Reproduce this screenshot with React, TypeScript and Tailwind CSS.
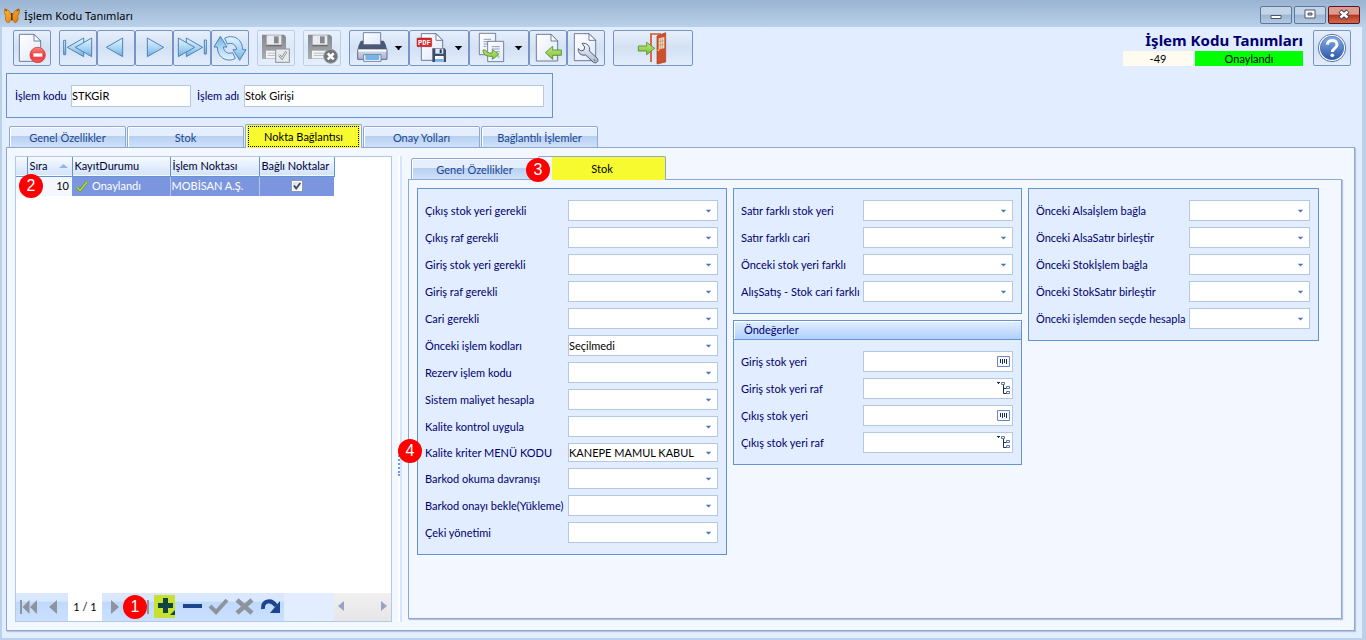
import { useId, type ReactNode } from "react";

const STEEL = "#5d6b8f";

function Badge({ n, place }: { n: number; place: string }) {
  return (
    <span
      className={`absolute z-10 flex h-6 w-6 items-center justify-center rounded-full bg-[#fe0000] font-[family-name:Liberation_Sans,sans-serif] text-[16px] leading-6 text-white ${place}`}
    >
      {n}
    </span>
  );
}

function Defs() {
  return (
    <svg className="absolute h-0 w-0" aria-hidden="true">
      <defs>
        <linearGradient id="page" x1="0" y1="0" x2="1" y2="1">
          <stop offset="0" stopColor="#ffffff" />
          <stop offset="1" stopColor="#dfe8f8" />
        </linearGradient>
        <linearGradient id="sky" x1="0" y1="0" x2="0" y2="1">
          <stop offset="0" stopColor="#e3f4ff" />
          <stop offset="0.55" stopColor="#a9d4f3" />
          <stop offset="1" stopColor="#6db0e0" />
        </linearGradient>
        <linearGradient id="red" x1="0" y1="0" x2="0" y2="1">
          <stop offset="0" stopColor="#ff8a86" />
          <stop offset="0.5" stopColor="#ee3a3c" />
          <stop offset="1" stopColor="#f4565a" />
        </linearGradient>
        <linearGradient id="green" x1="0" y1="0" x2="0" y2="1">
          <stop offset="0" stopColor="#c3e67c" />
          <stop offset="1" stopColor="#7fc03a" />
        </linearGradient>
        <linearGradient id="grey" x1="0" y1="0" x2="0" y2="1">
          <stop offset="0" stopColor="#85888e" />
          <stop offset="1" stopColor="#a9acb1" />
        </linearGradient>
        <linearGradient id="silver" x1="0" y1="0" x2="0" y2="1">
          <stop offset="0" stopColor="#f8faff" />
          <stop offset="1" stopColor="#a9b5cf" />
        </linearGradient>
        <linearGradient id="blue" x1="0" y1="0" x2="0" y2="1">
          <stop offset="0" stopColor="#86aee6" />
          <stop offset="1" stopColor="#2b57ab" />
        </linearGradient>
        <linearGradient id="wing" x1="0" y1="0" x2="1" y2="1">
          <stop offset="0" stopColor="#ffb52e" />
          <stop offset="1" stopColor="#e07a10" />
        </linearGradient>
      </defs>
    </svg>
  );
}

function Page({ x, y, w, h, f = 20 }: { x: number; y: number; w: number; h: number; f?: number }) {
  return (
    <g stroke={STEEL} strokeWidth="2.6" strokeLinejoin="round">
      <path fill="url(#page)" d={`M${x} ${y}H${x + w - f}L${x + w} ${y + f}V${y + h}H${x}Z`} />
      <path fill="#fff" d={`M${x + w - f} ${y}V${y + f}H${x + w}Z`} />
    </g>
  );
}

function Art({ x, wide, children }: { x: number; wide: string; children: ReactNode }) {
  const width = wide === "w-[58px]" ? 174 : wide === "w-[78px]" ? 234 : 108;
  return (
    <svg className={`h-[34px] ${wide}`} viewBox={`${x} 93 ${width} 102`} aria-hidden="true">
      {children}
    </svg>
  );
}

function GreyFloppy({ x }: { x: number }) {
  return (
    <g>
      <path fill="url(#grey)" d={`M${x} 104h66l6 6v67h-72z`} />
      <path fill="#e9ebee" d={`M${x + 14} 106h44v28h-44z`} />
      <path fill="#85888d" d={`M${x + 36} 109h14v21h-14z`} />
      <path fill="#6b6e74" d={`M${x + 13} 135h46v4h-46z`} />
      <path fill="#f2f3f5" d={`M${x + 12} 152h44v23h-44z`} />
      <path fill="#bcbfc4" d={`M${x + 17} 158h32v3h-32zM${x + 17} 165h32v3h-32z`} />
    </g>
  );
}

const PrintDrop = <path fill="#000" d="M164 138h23l-9 9v3h-5v-3z" />;

type Tool = { label: string; art: ReactNode; wide?: "menu" | "exit"; disabled?: boolean };

const nav = { fill: "url(#sky)", stroke: "#4f83b6", strokeWidth: 3, strokeLinejoin: "round" as const };
const TURN = "M674 115C694 103 727 112 728 149H738L719 181L699 149H710C708 133 696 127 682 132Z";

const toolGroups: Tool[][] = [
  [
    {
      label: "Sil",
      art: (
        <Art x={42} wide="w-[36px]">
          <Page x={58} y={103} w={64} h={81} />
          <circle cx="113" cy="165" r="23" fill="url(#red)" stroke="#d33b40" strokeWidth="2.5" />
          <rect x="100" y="160" width="27" height="10" fill="#fff" />
        </Art>
      ),
    },
  ],
  [
    {
      label: "İlk",
      art: (
        <Art x={180} wide="w-[36px]">
          <g {...nav}>
            <path d="M191 121h6v43h-6z" />
            <path d="M202 142l49-28v56z" />
            <path d="M226 142l49-28v56z" />
          </g>
        </Art>
      ),
    },
    {
      label: "Önceki",
      art: (
        <Art x={294} wide="w-[36px]">
          <path {...nav} d="M319 142l49-28v56z" />
        </Art>
      ),
    },
    {
      label: "Sonraki",
      art: (
        <Art x={408} wide="w-[36px]">
          <path {...nav} d="M442 114v56l49-28z" />
        </Art>
      ),
    },
    {
      label: "Son",
      art: (
        <Art x={522} wide="w-[36px]">
          <g {...nav}>
            <path d="M559 114v56l49-28z" />
            <path d="M535 114v56l49-28z" />
            <path d="M613 120h6v42h-6z" />
          </g>
        </Art>
      ),
    },
    {
      label: "Yenile",
      art: (
        <Art x={636} wide="w-[36px]">
          <g {...nav}>
            <path d={TURN} />
            <path d={TURN} transform="rotate(180 690 145)" />
          </g>
        </Art>
      ),
    },
  ],
  [
    {
      label: "Kaydet ve onayla",
      disabled: true,
      art: (
        <Art x={774} wide="w-[36px]">
          <GreyFloppy x={786} />
          <rect x="827" y="147" width="41" height="40" fill="#e6e9ee" stroke="#8f9299" strokeWidth="3" />
          <path d="M837 165l9 10 13-21" fill="none" stroke="#8a8d93" strokeWidth="7" />
          <path d="M837 165l9 10 13-21" fill="none" stroke="#fff" strokeWidth="2.5" />
        </Art>
      ),
    },
  ],
  [
    {
      label: "Kaydet ve kapat",
      disabled: true,
      art: (
        <Art x={912} wide="w-[36px]">
          <GreyFloppy x={924} />
          <circle cx="992" cy="169" r="21" fill="#717479" stroke="#a6a9ae" strokeWidth="3" />
          <path d="M983 160l18 18M1001 160l-18 18" stroke="#fff" strokeWidth="8" />
        </Art>
      ),
    },
  ],
  [
    {
      label: "Yazdır",
      wide: "menu",
      art: (
        <Art x={30} wide="w-[58px]">
          <path d="M53 151l9-26h70l9 26v27h-88z" fill="url(#silver)" stroke={STEEL} strokeWidth="3" strokeLinejoin="round" />
          <path d="M64 122h66l8 15v11H56v-11z" fill="#4b5873" />
          <path d="M70 98h52v36H70z" fill="url(#page)" stroke={STEEL} strokeWidth="2.5" />
          <path d="M55 152h84" stroke="#fff" strokeWidth="5" />
          <path d="M71 164h52v20H71z" fill="#fff" stroke={STEEL} strokeWidth="2.5" />
          <path d="M76 165h42v15H76z" fill="#74b6ec" />
          {PrintDrop}
        </Art>
      ),
    },
    {
      label: "PDF olarak kaydet",
      wide: "menu",
      art: (
        <Art x={210} wide="w-[58px]">
          <Page x={244} y={101} w={64} h={80} />
          <rect x="231" y="114" width="44" height="26" rx="2" fill="#d8282c" stroke="#a51d22" strokeWidth="1.5" />
          <text x="253" y="134" textAnchor="middle" fontSize="21" fontWeight="700" fontFamily="Liberation Mono, monospace" fill="#fff">
            PDF
          </text>
          <path d="M277 145h37l4 4v37h-41z" fill="#3e4d6c" />
          <path d="M286 146h24v15h-24z" fill="#dfe8f8" />
          <path d="M299 148h6v11h-6z" fill="#2b3650" />
          <path d="M285 168h26v17h-26z" fill="#fff" />
          <path d="M285 177h26v8h-26z" fill="#74b6ec" />
          <g transform="translate(180)">{PrintDrop}</g>
        </Art>
      ),
    },
    {
      label: "Kopyala",
      wide: "menu",
      art: (
        <Art x={390} wide="w-[58px]">
          <path d="M418 100h49v64h-49z" fill="url(#page)" stroke={STEEL} strokeWidth="2.5" />
          <path d="M431 118h22M431 125h22M431 132h14M431 139h8" stroke="#8d9dc0" strokeWidth="3" />
          <path d="M443 124h48v61h-48z" fill="url(#page)" stroke={STEEL} strokeWidth="2.5" />
          <path d="M455 140h24M455 147h24M468 155h11M472 171h7" stroke="#8d9dc0" strokeWidth="3" />
          <path d="M429 150h8c1 7 8 10 20 9v-10l20 14-20 15v-9c-18 1-28-5-28-19z" fill="url(#green)" stroke="#4c8a2a" strokeWidth="2.5" strokeLinejoin="round" />
          <g transform="translate(360)">{PrintDrop}</g>
        </Art>
      ),
    },
    {
      label: "İçeri al",
      art: (
        <Art x={570} wide="w-[36px]">
          <Page x={589} y={103} w={64} h={80} />
          <path d="M616 158l22-19v11h26v16h-26v12z" fill="url(#green)" stroke="#4c8a2a" strokeWidth="2.5" strokeLinejoin="round" />
        </Art>
      ),
    },
    {
      label: "Ayarlar",
      art: (
        <Art x={684} wide="w-[36px]">
          <Page x={703} y={101} w={64} h={81} />
          <path
            d="M726 130l8 11-2 9-9 3-8-7c-2 13 8 22 22 19l23 22c8 5 18-3 12-12l-24-22c4-14-7-25-22-23z"
            fill="url(#silver)"
            stroke="#515d78"
            strokeWidth="3"
            strokeLinejoin="round"
          />
          <circle cx="764" cy="180" r="2.5" fill="#515d78" />
        </Art>
      ),
    },
  ],
  [
    {
      label: "Çıkış",
      wide: "exit",
      art: (
        <Art x={822} wide="w-[78px]">
          <path d="M933 186v-84h30" fill="none" stroke="#d9512c" strokeWidth="5" />
          <path d="M977 98v88l-26 6v-84z" fill="#cf4e2b" stroke="#a93a1c" strokeWidth="2" />
          <path d="M956 115l17-4v34l-17 3z" fill="#f7dfc2" />
          <path d="M961 114v33M967 113v33M956 125l17-3M956 136l17-3" stroke="#b98d6d" strokeWidth="2" />
          <path d="M953 148h5v5h-5z" fill="#f6c86a" />
          <path d="M895 138h25v-11l24 18-24 19v-11h-25z" fill="url(#green)" stroke="#4c8a2a" strokeWidth="2.5" strokeLinejoin="round" />
        </Art>
      ),
    },
  ],
];

function ToolButton({ tool }: { tool: Tool }) {
  const size = tool.wide === "menu" ? "w-[60px]" : tool.wide === "exit" ? "w-20" : "w-[38px]";
  const tone = tool.disabled
    ? "border-[#bccde6] from-[#e9f1fd] via-[#dce8f8] to-[#e6effc]"
    : "border-[#7795c4] from-[#e6effc] via-[#d3e1f4] to-[#e3edfb]";
  return (
    <button
      type="button"
      aria-label={tool.label}
      disabled={tool.disabled}
      className={`flex h-9 shrink-0 items-center justify-center rounded-[2px] border bg-linear-to-b ${size} ${tone}`}
    >
      {tool.art}
    </button>
  );
}

function Tab({ label, active, size, focus }: { label: string; active?: boolean; size: string; focus?: boolean }) {
  return active ? (
    <button
      type="button"
      role="tab"
      aria-selected="true"
      className={`h-6 rounded-t-[2px] border border-b-0 border-[#8ea7d3] text-black ${
        focus ? "bg-[#f3f7ff] px-px" : "bg-[linear-gradient(to_right,#f3f7ff_13px,#f6fa2e_13px)]"
      } ${size}`}
    >
      <span className={`flex h-full ${focus ? "bg-[#f6fa2e] p-px" : ""}`}>
        <span className={`flex flex-1 items-center justify-center ${focus ? "border border-dotted border-black" : ""}`}>{label}</span>
      </span>
    </button>
  ) : (
    <button
      type="button"
      role="tab"
      aria-selected="false"
      className={`h-[22px] rounded-t-[2px] border border-[#8ea7d3] bg-linear-to-b from-[#e4eefc] from-45% via-[#b7d0f1] via-46% to-[#cfe1fa] pt-0.5 text-[#1c4690] shadow-[inset_1px_1px_0_#fff] ${size}`}
    >
      {label}
    </button>
  );
}

function Field({
  label,
  value = "",
  labelWidth,
  kind = "select",
  compact,
  badge,
}: {
  label: string;
  value?: string;
  labelWidth: string;
  kind?: "select" | "barcode" | "tree";
  compact?: boolean;
  badge?: number;
}) {
  const id = useId();
  const height = compact ? "h-[19px]" : "h-[21px]";
  return (
    <div className="relative flex items-center">
      {badge && <Badge n={badge} place="-left-[27px] -top-1" />}
      <label htmlFor={id} className={`shrink-0 whitespace-nowrap text-[#00006e] ${labelWidth}`}>
        {label}
      </label>
      <div className="relative flex min-w-0 flex-1">
        {kind === "select" ? (
          <>
            <select id={id} defaultValue={value} className={`w-full appearance-none border border-[#b3c8e4] bg-white text-black ${height}`}>
              <option value={value}>{value}</option>
            </select>
            <svg className="pointer-events-none absolute top-1/2 right-[7px] h-[3px] w-[5px] -translate-y-1/2" viewBox="0 0 5 3" aria-hidden="true">
              <path d="M0 0h5v1H4v1H3v1H2V2H1V1H0z" fill="#4a76ad" />
            </svg>
          </>
        ) : (
          <>
            <input id={id} type="text" className={`w-full border border-[#b3c8e4] bg-white pr-5 text-black ${height}`} />
            {kind === "barcode" ? (
              <svg className="pointer-events-none absolute top-[5px] right-[3px] h-[11px] w-[13px]" viewBox="0 0 39 33" aria-hidden="true">
                <path d="M1.5 1.5h36v30h-36z" fill="#f3f7ff" stroke="#6c86c0" strokeWidth="3" />
                <path d="M10.5 9v12M16.500 9v15M22.500 9v12M28.500 9v15" stroke="#222c44" strokeWidth="3" />
              </svg>
            ) : (
              <svg className="pointer-events-none absolute top-[3px] right-[3px] h-[14px] w-[13px]" viewBox="0 0 39 42" aria-hidden="true">
                <path d="M0 3h9v3H6v3H3V6H0z" fill="#222c44" />
                <path d="M19.500 10v27.500h9M19.500 22.500h9" fill="none" stroke="#222c44" strokeWidth="3" />
                <path d="M13.500 4.500h9v6h-9zM28.500 16.500h9v6h-9zM28.500 31.500h9v6h-9z" fill="#fff" stroke="#5d77ac" strokeWidth="3" />
              </svg>
            )}
          </>
        )}
      </div>
    </div>
  );
}

function Group({ title, size, children }: { title?: string; size: string; children: ReactNode }) {
  return (
    <fieldset className={`border border-[#6593cf] bg-[#e2edff] ${size}`}>
      {title && (
        <div className="flex h-[19px] items-center border-b border-[#6593cf] bg-linear-to-b from-[#e3efff] to-[#afd0ff] pl-2.5 text-[#00006e] shadow-[inset_1px_1px_0_#fff]">
          {title}
        </div>
      )}
      <div className="flex flex-col gap-1.5 py-[11px] pr-2 pl-[7px]">{children}</div>
    </fieldset>
  );
}

const stockFields: { label: string; value?: string; compact?: boolean; badge?: number }[] = [
  { label: "Çıkış stok yeri gerekli" },
  { label: "Çıkış raf gerekli" },
  { label: "Giriş stok yeri gerekli" },
  { label: "Giriş raf gerekli" },
  { label: "Cari gerekli" },
  { label: "Önceki işlem kodları", value: "Seçilmedi" },
  { label: "Rezerv işlem kodu" },
  { label: "Sistem maliyet hesapla" },
  { label: "Kalite kontrol uygula" },
  { label: "Kalite kriter MENÜ KODU", value: "KANEPE MAMUL KABUL", compact: true, badge: 4 },
  { label: "Barkod okuma davranışı" },
  { label: "Barkod onayı bekle(Yükleme)" },
  { label: "Çeki yönetimi" },
];
const lineFields = ["Satır farklı stok yeri", "Satır farklı cari", "Önceki stok yeri farklı", "AlışSatış - Stok cari farklı"];
const defaultFields: { label: string; kind: "barcode" | "tree" }[] = [
  { label: "Giriş stok yeri", kind: "barcode" },
  { label: "Giriş stok yeri raf", kind: "tree" },
  { label: "Çıkış stok yeri", kind: "barcode" },
  { label: "Çıkış stok yeri raf", kind: "tree" },
];
const previousFields = [
  "Önceki Alsaİşlem bağla",
  "Önceki AlsaSatır birleştir",
  "Önceki Stokİşlem bağla",
  "Önceki StokSatır birleştir",
  "Önceki işlemden seçde hesapla",
];

function NavButton({ label, children }: { label: string; children: ReactNode }) {
  return (
    <button
      type="button"
      aria-label={label}
      className="relative flex w-[26px] shrink-0 items-start justify-center bg-linear-to-b from-[#d9e8ff] from-30% via-[#bfd9ff] via-31% to-[#cbe0ff] pt-0.5"
    >
      <svg className="h-6 w-[26px]" viewBox="0 0 26 24" aria-hidden="true">
        {children}
      </svg>
    </button>
  );
}

function TitleBar() {
  const box = "flex h-[18px] w-8 items-center justify-center rounded-[2px] border";
  return (
    <header className="flex h-[27px] items-center bg-linear-to-b from-[#9ab3d1] to-[#b9d1ea] pr-1.5 pl-1">
      <svg className="mt-1 h-4 w-4" viewBox="0 0 48 48" aria-hidden="true">
        <path
          d="M1 3c9-1 17 6 20 17h6C30 10 37 2 46 3c1 9-1 16-5 21 3 7 1 17-6 20-6-1-9-6-10-12h-3c-2 7-5 12-11 12-7-3-8-13-5-20C2 18 0 11 1 3z"
          fill="url(#wing)"
          stroke="#a85a0c"
          strokeWidth="2"
        />
        <path d="M23.500 15v22" stroke="#4a2a10" strokeWidth="4" />
        <path d="M3 5l6 4M44 5l-6 4" stroke="#5b2d08" strokeWidth="3" />
      </svg>
      <h1 className="ml-1 flex-1 pt-1 font-[family-name:Noto_Sans,sans-serif] text-[11px] leading-4 text-black">İşlem Kodu Tanımları</h1>
      <div className="flex gap-0.5 pt-0.5">
        <button type="button" aria-label="Simge durumuna küçült" className={`${box} border-[#5f7897] bg-linear-to-b from-[#c3d4e8] from-45% via-[#9db6d3] via-50% to-[#b4cae3]`}>
          <svg className="h-[11px] w-3" viewBox="0 0 12 11">
            <path d="M1 6.500h10v3H1z" fill="#fff" stroke="#4d5668" />
          </svg>
        </button>
        <button type="button" aria-label="Ekranı kapla" className={`${box} border-[#5f7897] bg-linear-to-b from-[#c3d4e8] from-45% via-[#9db6d3] via-50% to-[#b4cae3]`}>
          <svg className="h-[11px] w-3" viewBox="0 0 12 11">
            <path d="M1 1h10v8H1z" fill="#fff" stroke="#4d5668" />
            <path d="M4 4h4v2H4z" fill="#9db6d3" stroke="#4d5668" />
          </svg>
        </button>
        <button type="button" aria-label="Kapat" className={`${box} border-[#5a1520] bg-linear-to-b from-[#dc9c8f] from-45% via-[#b8331c] via-50% to-[#cf6a4d]`}>
          <svg className="h-[11px] w-3" viewBox="0 0 12 11">
            <path d="M2 2l8 7M10 2l-8 7" stroke="#4a4252" strokeWidth="4.500" />
            <path d="M2.500 2.500l7 6M9.500 2.500l-7 6" stroke="#fff" strokeWidth="2.500" />
          </svg>
        </button>
      </div>
    </header>
  );
}

function PointGrid() {
  const head = "border-r border-[#6593cf] px-0.5 text-left font-normal text-[#000033]";
  return (
    <section className="flex w-[377px] shrink-0 flex-col border border-[#b3c8e4] bg-white">
      <table className="w-[318px] table-fixed border-collapse">
        <colgroup>
          <col className="w-[11px]" />
          <col className="w-[45px]" />
          <col className="w-[98px]" />
          <col className="w-[89px]" />
          <col className="w-[75px]" />
        </colgroup>
        <thead>
          <tr className="h-[19px] border-b border-[#6593cf] bg-linear-to-b from-[#f6faff] to-[#d3e4fc]">
            <th className={head} aria-label="Seçim" />
            <th className={head}>
              <span className="flex items-center justify-between pr-0.5">
                Sıra
                <svg className="h-1 w-[9px]" viewBox="0 0 9 4" aria-hidden="true">
                  <path d="M0 4l4.500-4L9 4z" fill="#8fb7ec" />
                </svg>
              </span>
            </th>
            <th className={head}>KayıtDurumu</th>
            <th className={head}>İşlem Noktası</th>
            <th className={`${head} whitespace-nowrap`}>Bağlı Noktalar</th>
          </tr>
        </thead>
        <tbody>
          <tr className="h-5 bg-[#7b96df] text-white">
            <td className="relative border-r border-[#b3c8e4] bg-[#f3f7ff]">
              <Badge n={2} place="left-[3px] -top-[3px]" />
            </td>
            <td className="bg-[#f3f7ff] pr-[3px] text-right text-black">10</td>
            <td className="border-r border-[#b3c8e4] px-1">
              <span className="flex items-center gap-1">
                <svg className="h-3 w-3" viewBox="0 0 36 36" aria-hidden="true">
                  <path d="M3 22l9 10L33 5" fill="none" stroke="#5c8d1f" strokeWidth="8" />
                  <path d="M3 22l9 10L33 5" fill="none" stroke="#b4e04c" strokeWidth="4.500" />
                </svg>
                Onaylandı
              </span>
            </td>
            <td className="border-r border-[#b3c8e4] px-px whitespace-nowrap">MOBİSAN A.Ş.</td>
            <td>
              <span className="relative flex justify-center">
                <input
                  type="checkbox"
                  defaultChecked
                  aria-label="Bağlı Noktalar"
                  className="h-3 w-3 appearance-none border border-[#8c98ae] bg-linear-to-br from-[#d5dbe4] to-white outline outline-offset-[-2px] outline-white"
                />
                <svg className="pointer-events-none absolute top-0 h-3 w-3" viewBox="0 0 12 12" aria-hidden="true">
                  <path d="M3 5.500l2.200 3L9.300 3" fill="none" stroke="#33486f" strokeWidth="1.800" />
                </svg>
              </span>
            </td>
          </tr>
        </tbody>
      </table>
      <div className="flex-1" />
      <div className="relative flex h-7 bg-[#e2edff]">
        <NavButton label="İlk kayıt">
          <path d="M4 5h2v14H4zM6.500 12l7-7v14zM14 12l7-7v14z" fill="#8f949c" />
        </NavButton>
        <NavButton label="Önceki kayıt">
          <path d="M7 12l8-7v14z" fill="#8f949c" />
        </NavButton>
        <span className="flex w-[34px] items-center justify-center bg-white text-black">1 / 1</span>
        <NavButton label="Sonraki kayıt">
          <path d="M9 5v14l8-7z" fill="#8f949c" />
        </NavButton>
        <NavButton label="Son kayıt">
          <path d="M19 5h2v14h-2zM3 5v14l7-7zM11 5v14l7-7z" fill="#8f949c" />
        </NavButton>
        <Badge n={1} place="left-[107px] top-0.5" />
        <NavButton label="Ekle">
          <path d="M0 0h21v23H0z" fill="#c8e02f" />
          <path d="M9 3h5v5h5v5h-5v5H9v-5H4V8h5z" fill="#12453d" />
          <path d="M16 20h5v-5z" fill="#12453d" />
        </NavButton>
        <NavButton label="Çıkar">
          <path d="M3 9h19v4H3z" fill="#1d458f" />
        </NavButton>
        <NavButton label="Onayla">
          <path d="M4 11l6 6L21 5" fill="none" stroke="#8f949c" strokeWidth="4" />
        </NavButton>
        <NavButton label="Vazgeç">
          <path d="M5 5l15 13M20 5L5 18" stroke="#8f949c" strokeWidth="4.500" />
        </NavButton>
        <NavButton label="Yenile">
          <path d="M5 14C4 5 14 4 18 11" fill="none" stroke="#1d458f" strokeWidth="4" />
          <path d="M22 6v12H12z" fill="#1d458f" />
        </NavButton>
        <div className="ml-auto flex w-[57px] items-center justify-between bg-linear-to-b from-[#f0f0f0] to-[#e6e6e6] px-1">
          <button type="button" aria-label="Sola kaydır" className="pb-0.5">
            <svg className="h-2.5 w-[6px]" viewBox="0 0 6 10">
              <path d="M6 0v10L0 5z" fill="#98a4c5" />
            </svg>
          </button>
          <button type="button" aria-label="Sağa kaydır" className="pb-0.5">
            <svg className="h-2.5 w-[6px]" viewBox="0 0 6 10">
              <path d="M0 0v10l6-5z" fill="#98a4c5" />
            </svg>
          </button>
        </div>
      </div>
    </section>
  );
}

export default function App() {
  const text = "w-full border border-[#b3c8e4] bg-white text-black h-[22px]";
  return (
    <div className="flex min-h-screen flex-col bg-[#b9d1ea] font-[family-name:Lato,sans-serif] text-[11px] leading-[14px]">
      <Defs />
      <TitleBar />
      <main className="mr-1 mb-0.5 ml-0.5 flex flex-1 flex-col bg-[#e2edff] pr-[7px] pb-[7px] pl-1">
        <div className="flex items-start gap-2 pt-[3px] pr-1 pl-[7px]">
          {toolGroups.map((group, i) => (
            <div key={i} className="flex">
              {group.map((tool) => (
                <ToolButton key={tool.label} tool={tool} />
              ))}
            </div>
          ))}
          <div className="mr-0.5 ml-auto flex w-[180px] flex-col">
            <h2 className="text-right font-[family-name:Noto_Sans,sans-serif] text-[15px] leading-[21px] font-bold whitespace-nowrap text-[#00006e]">
              İşlem Kodu Tanımları
            </h2>
            <div className="flex gap-0.5 text-center leading-4 text-black">
              <span className="h-[15px] w-[70px] bg-[#fffbf0]">-49</span>
              <span className="h-[15px] flex-1 bg-[#00ff00]">Onaylandı</span>
            </div>
          </div>
          <button
            type="button"
            aria-label="Yardım"
            className="flex h-9 w-[38px] shrink-0 items-center justify-center rounded-[2px] border border-[#7795c4] bg-linear-to-b from-[#e6effc] via-[#d3e1f4] to-[#e3edfb]"
          >
            <svg className="h-[30px] w-[30px]" viewBox="0 0 90 90" aria-hidden="true">
              <circle cx="45" cy="45" r="41" fill="#fff" stroke="#5873a8" strokeWidth="3" />
              <circle cx="45" cy="45" r="35" fill="url(#blue)" stroke="#3d62a8" strokeWidth="2" />
              <path d="M31 35c1-17 29-17 29 0 0 11-14 11-14 22" fill="none" stroke="#fff" strokeWidth="9" />
              <circle cx="46" cy="67" r="5.500" fill="#fff" />
            </svg>
          </button>
        </div>

        <div className="mt-[7px] flex h-[45px] w-[547px] items-center border border-[#6593cf] px-2 text-[#00006e]">
          <label htmlFor="code" className="w-14 shrink-0 whitespace-nowrap">
            İşlem kodu
          </label>
          <div className="w-[120px]">
            <input id="code" type="text" defaultValue="STKGİR" className={text} />
          </div>
          <label htmlFor="name" className="ml-1.5 w-[47px] shrink-0 whitespace-nowrap">
            İşlem adı
          </label>
          <div className="flex-1">
            <input id="name" type="text" defaultValue="Stok Girişi" className={text} />
          </div>
        </div>

        <div className="relative z-10 mt-1.5 -mb-px flex items-end gap-px pl-[3px]" role="tablist">
          <Tab label="Genel Özellikler" size="w-[117px]" />
          <Tab label="Stok" size="w-[117px]" />
          <Tab label="Nokta Bağlantısı" size="w-[117px]" active focus />
          <Tab label="Onay Yolları" size="w-[117px]" />
          <Tab label="Bağlantılı İşlemler" size="w-[117px]" />
        </div>

        <div className="flex flex-1 border border-[#8ea7d3] bg-[#f3f7ff] py-2 pr-3 pl-2 shadow-[1px_1px_1px_#b5c3de]">
          <PointGrid />
          <div className="flex w-4 shrink-0 items-center justify-center">
            <div className="flex h-full w-1 items-center border-r-2 border-[#d3e5ff] bg-white">
              <div className="mt-[150px] h-6 border-r-2 border-dotted border-[#6f9bdb]" />
            </div>
          </div>
          <div className="flex min-w-0 flex-1 flex-col pb-[3px]">
            <div className="relative z-10 -mb-px flex items-end pl-[3px]" role="tablist">
              <Tab label="Genel Özellikler" size="w-[127px]" />
              <Badge n={3} place="left-[118px] top-0.5" />
              <Tab label="Stok" size="w-[128px]" active />
            </div>
            <div className="flex flex-1 items-start gap-1.5 border border-[#8ea7d3] bg-[#f3f7ff] p-2 shadow-[1px_1px_1px_#b5c3de]">
              <Group size="w-[310px]">
                {stockFields.map((f) => (
                  <Field key={f.label} labelWidth="w-[143px]" {...f} />
                ))}
              </Group>
              <div className="flex w-[289px] flex-col gap-1.5">
                <Group size="w-full">
                  {lineFields.map((label) => (
                    <Field key={label} label={label} labelWidth="w-[122px]" />
                  ))}
                </Group>
                <Group size="w-full" title="Öndeğerler">
                  {defaultFields.map((f) => (
                    <Field key={f.label} labelWidth="w-[122px]" {...f} />
                  ))}
                </Group>
              </div>
              <Group size="w-[291px]">
                {previousFields.map((label) => (
                  <Field key={label} label={label} labelWidth="w-[153px]" />
                ))}
              </Group>
            </div>
          </div>
        </div>
      </main>
    </div>
  );
}
